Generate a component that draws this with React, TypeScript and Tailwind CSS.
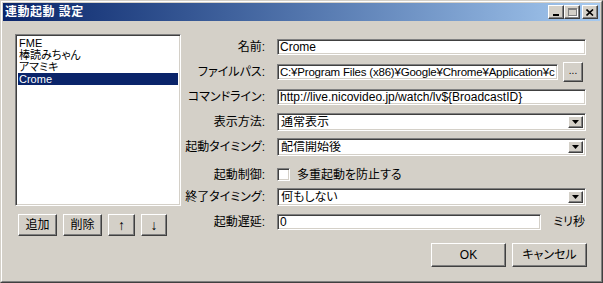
import type { ReactNode } from "react";

const font =
  "font-['Liberation_Sans','Noto_Sans_CJK_JP',sans-serif] [font-feature-settings:'palt'] text-[12px] text-black";

const sunken =
  "border border-t-[#808080] border-l-[#808080] border-r-white border-b-white shadow-[inset_1px_1px_0_#404040,inset_-1px_-1px_0_#d4d0c8]";

const raised =
  "border border-t-white border-l-white border-r-[#404040] border-b-[#404040] shadow-[inset_-1px_-1px_0_#808080,inset_1px_1px_0_#d4d0c8] bg-[#d4d0c8]";

const items = ["FME", "棒読みちゃん", "アマミキ", "Crome"];

function TextBox({ value, className = "" }: { value: string; className?: string }) {
  return (
    <div
      className={`h-[16px] min-w-0 bg-white ${sunken} flex items-center pl-[2px] overflow-hidden whitespace-nowrap leading-[12px] ${className}`}
    >
      {value}
    </div>
  );
}

function Combo({ value }: { value: string }) {
  return (
    <div className={`h-[18px] flex-1 min-w-0 bg-white ${sunken} flex items-center p-[2px]`}>
      <span className="flex-1 min-w-0 pl-[1px] leading-[12px] whitespace-nowrap overflow-hidden">{value}</span>
      <div className={`w-[15px] h-full shrink-0 ${raised} flex items-center justify-center`}>
        <svg width="7" height="4" viewBox="0 0 7 4">
          <path d="M0 0h7L3.5 4z" fill="#000" />
        </svg>
      </div>
    </div>
  );
}

function Row({ label, children, className = "" }: { label: string; children: ReactNode; className?: string }) {
  return (
    <div className={`h-[25px] flex items-center ${className}`}>
      <div className="w-[85px] shrink-0 pr-[1px] text-right whitespace-nowrap leading-[12px]">{label}</div>
      <div className="flex-1 min-w-0 ml-[11px] flex items-center">{children}</div>
    </div>
  );
}

function Btn({ children, className = "" }: { children: ReactNode; className?: string }) {
  return (
    <div className={`${raised} shrink-0 flex items-center justify-center leading-[12px] ${className}`}>
      {children}
    </div>
  );
}

export default function App() {
  return (
    <div
      className={`w-[603px] h-[283px] overflow-hidden bg-[#d4d0c8] border border-t-[#d4d0c8] border-l-[#d4d0c8] border-r-[#404040] border-b-[#404040] ${font}`}
    >
      <div className="h-full border border-t-white border-l-white border-r-[#808080] border-b-[#808080] p-[1px] flex flex-col">
        {/* Title bar */}
        <div className="h-[18px] flex items-center pl-[2px] pr-[2px] bg-gradient-to-r from-[#0a246a] to-[#a6caf0]">
          <span className="flex-1 text-white font-bold text-[12px] leading-[14px] tracking-[0.5px]">
            連動起動 設定
          </span>
          <div className={`w-[16px] h-[14px] ${raised} relative`}>
            <div className="absolute left-[4px] top-[8px] w-[6px] h-[2px] bg-black" />
          </div>
          <div className={`w-[16px] h-[14px] ${raised} flex items-center justify-center`}>
            <div className="w-[9px] h-[8px] border border-t-2 border-[#808080] shadow-[1px_1px_0_white]" />
          </div>
          <div className={`w-[16px] h-[14px] ml-[2px] ${raised} flex items-center justify-center`}>
            <svg width="8" height="7" viewBox="0 0 8 7">
              <path d="M0.5 0.5L7 6.5M7 0.5L0.5 6.5" stroke="#000" strokeWidth="1.6" />
            </svg>
          </div>
        </div>

        {/* Client */}
        <div className="flex-1 min-h-0 flex">
          <div className="pl-[12px] pt-[13px] flex flex-col shrink-0">
            <div className={`w-[166px] h-[172px] bg-white ${sunken} p-[2px]`}>
              {items.map((it, i) => (
                <div
                  key={it}
                  className={`h-[12px] leading-[12px] text-[11px] pl-[1px] whitespace-nowrap overflow-hidden ${
                    i === 3 ? "bg-[#0a246a] text-white" : ""
                  }`}
                >
                  {it}
                </div>
              ))}
            </div>
            <div className="flex gap-[6px] mt-[8px] ml-[3px]">
              <Btn className="w-[39px] h-[22px]">追加</Btn>
              <Btn className="w-[39px] h-[22px]">削除</Btn>
              <Btn className="w-[27px] h-[22px] text-[14px]">↑</Btn>
              <Btn className="w-[26px] h-[22px] text-[14px]">↓</Btn>
            </div>
          </div>

          <div className="flex-1 min-w-0 pt-[13px] pr-[14px] flex flex-col">
            <Row label="名前:">
              <TextBox value="Crome" className="flex-1" />
            </Row>
            <Row label="ファイルパス:">
              <TextBox
                value="C:¥Program Files (x86)¥Google¥Chrome¥Application¥c"
                className="flex-1 text-[11.5px] tracking-[-0.2px]"
              />
              <Btn className="w-[20px] h-[20px] ml-[5px] mr-[3px] items-end pb-[4px] text-[10px]">...</Btn>
            </Row>
            <Row label="コマンドライン:">
              <TextBox value="http://live.nicovideo.jp/watch/lv${BroadcastID}" className="flex-1" />
            </Row>
            <Row label="表示方法:">
              <Combo value="通常表示" />
            </Row>
            <Row label="起動タイミング:">
              <Combo value="配信開始後" />
            </Row>
            <Row label="起動制御:" className="pt-[6px]">
              <div className={`w-[13px] h-[13px] shrink-0 bg-white ${sunken}`} />
              <span className="ml-[7px] leading-[12px]">多重起動を防止する</span>
            </Row>
            <Row label="終了タイミング:">
              <Combo value="何もしない" />
            </Row>
            <Row label="起動遅延:">
              <TextBox value="0" className="flex-1" />
              <span className="ml-[12px] mr-[1px] leading-[12px] shrink-0">ミリ秒</span>
            </Row>
            <div className="flex justify-end gap-[6px] mt-[9px] -mr-[1px]">
              <Btn className="w-[75px] h-[24px]">OK</Btn>
              <Btn className="w-[75px] h-[24px]">キャンセル</Btn>
            </div>
          </div>
        </div>
      </div>
    </div>
  );
}
